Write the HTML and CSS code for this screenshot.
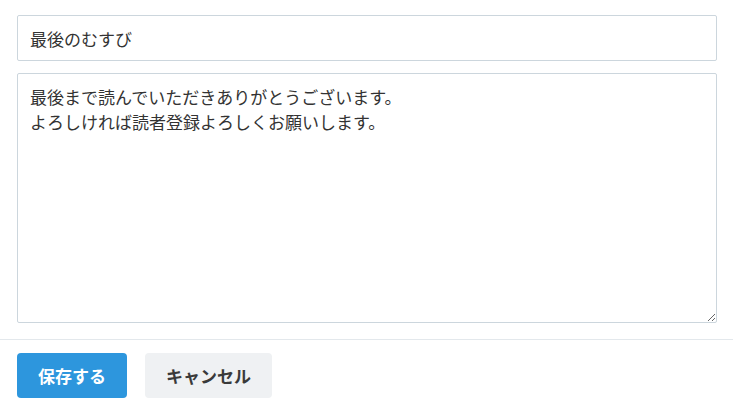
FILE: index.html
```html
<!DOCTYPE html>
<html lang="ja">
<head>
    <meta charset="UTF-8">
    <meta name="viewport" content="width=device-width, initial-scale=1.0">
    <title>最後のむすび</title>
    <link rel="stylesheet" href="styles.css">
</head>
<body>
    <form class="editor">
        <div class="fields">
            <input class="title-input" type="text" value="最後のむすび">
            <textarea class="body-input">最後まで読んでいただきありがとうございます。
よろしければ読者登録よろしくお願いします。</textarea>
        </div>
        <div class="actions">
            <button type="button" class="btn btn-primary">保存する</button>
            <button type="button" class="btn btn-cancel">キャンセル</button>
        </div>
    </form>
</body>
</html>
```

FILE: styles.css
```css
body {
    margin: 0;
    padding: 0;
    background-color: #fff;
    font-family: "Noto Sans CJK JP", "Noto Sans", sans-serif;
    color: #333;
}
.editor {
    margin: 0;
}
.fields {
    display: flex;
    flex-direction: column;
    gap: 12px;
    padding: 15px 16px 16px 17px;
    border-bottom: 1px solid #e3e8ec;
}
.title-input,
.body-input {
    width: 100%;
    box-sizing: border-box;
    border: 1px solid #ccd6dd;
    border-radius: 2px;
    font-family: inherit;
    font-size: 17px;
    color: #333;
    padding: 0 12px;
    margin: 0;
    outline: none;
}
.title-input {
    height: 46px;
}
.body-input {
    height: 250px;
    padding: 10px 12px;
    line-height: 25px;
    resize: vertical;
    display: block;
}
.actions {
    display: flex;
    gap: 18px;
    padding: 13px 17px;
}
.btn {
    height: 45px;
    border: none;
    border-radius: 4px;
    font-family: inherit;
    font-size: 17px;
    font-weight: bold;
    cursor: pointer;
}
.btn-primary {
    width: 110px;
    background-color: #2d96dd;
    color: #fff;
}
.btn-cancel {
    width: 127px;
    background-color: #eff1f3;
    color: #3a3a3a;
}
```
